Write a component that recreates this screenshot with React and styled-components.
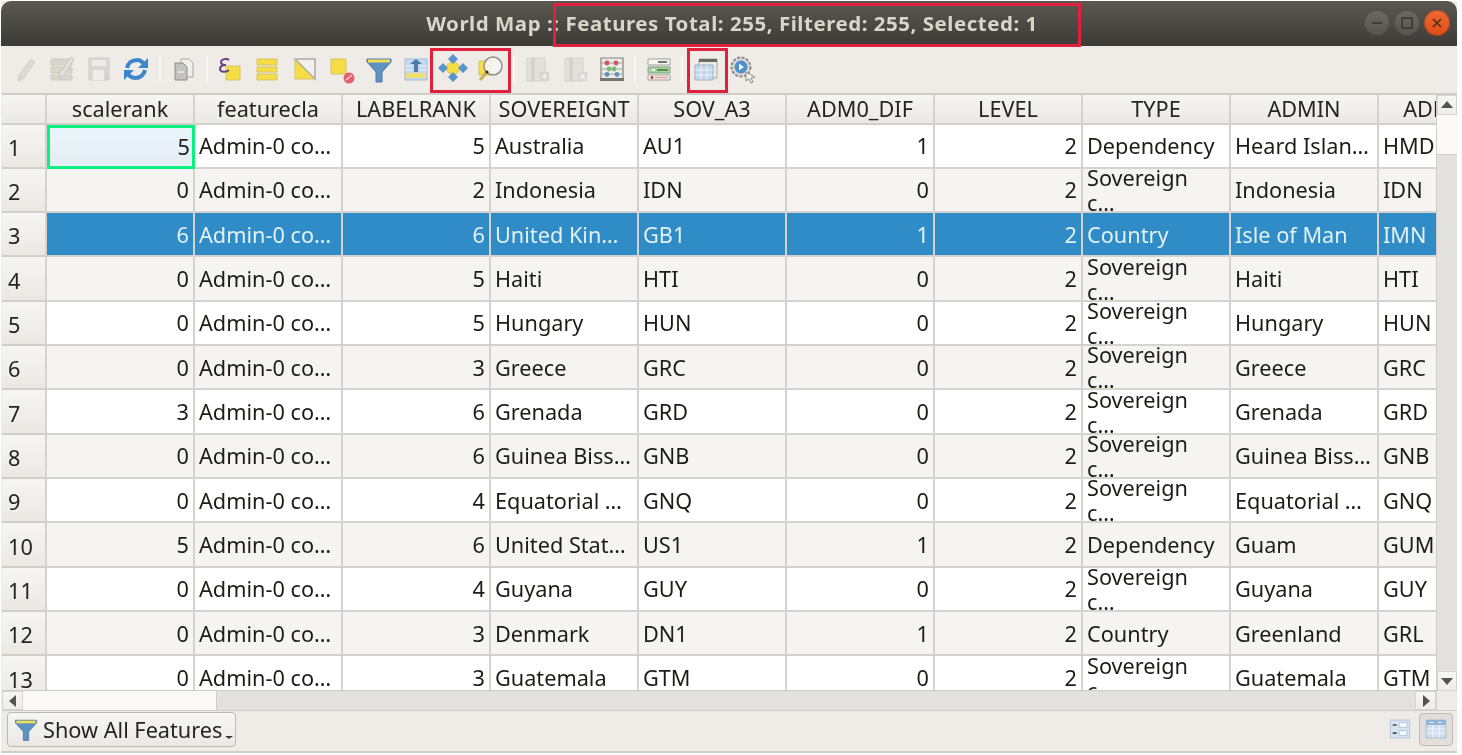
import React from 'react';
import styled, { createGlobalStyle } from 'styled-components';

const UI_FONT = '"Noto Sans", "Open Sans", sans-serif';

const GlobalStyle = createGlobalStyle`
  html, body {
    margin: 0;
    background: #fff;
    overflow: hidden;
  }
  body {
    font-family: ${UI_FONT};
  }
`;

const Page = styled.div`
  width: 1462px;
  height: 755px;
  padding: 1px 0 0 1px;
  box-sizing: border-box;
  filter: blur(0.45px);
`;

const Window = styled.div`
  position: relative;
  width: 1456px;
  height: 752px;
  display: flex;
  flex-direction: column;
  background: #efebe7;
  border-bottom: 2px solid #cfccc8;
  box-sizing: border-box;
`;

const TitleBar = styled.div`
  height: 45px;
  flex: none;
  display: grid;
  grid-template-columns: 1fr auto 1fr;
  align-items: center;
  border-radius: 10px 10px 0 0;
  background: linear-gradient(#5b5850, #3c3b37);
`;

const TitleText = styled.div`
  grid-column: 2;
  padding: 0 0 2px 6px;
  font-size: 20.45px;
  font-weight: 700;
  letter-spacing: 0.55px;
  color: #d9d5cb;
  white-space: nowrap;
`;

const WindowButtons = styled.div`
  grid-column: 3;
  justify-self: end;
  display: flex;
  gap: 4px;
  padding: 0 7px 2px 0;
`;

const WindowButton = styled.div`
  width: 26px;
  height: 26px;
  border-radius: 50%;
  display: flex;
  align-items: center;
  justify-content: center;
  background: ${(p) => (p.$close ? 'linear-gradient(#ee6a33, #df4c16)' : 'linear-gradient(#6c6a65, #55534e)')};
  box-shadow: inset 0 0 0 1px rgba(40, 40, 36, 0.35);
`;

const Toolbar = styled.div`
  height: 46.5px;
  flex: none;
  box-sizing: border-box;
  display: flex;
  align-items: center;
  padding: 0 0 1px 5px;
`;

const Tool = styled.div`
  width: 37.15px;
  height: 32px;
  flex: none;
  display: flex;
  align-items: center;
  justify-content: center;
`;

const ToolSeparator = styled.div`
  width: 10px;
  height: 26px;
  flex: none;
  display: flex;
  justify-content: center;
  &::before {
    content: '';
    width: 2px;
    background: #f8f6f4;
  }
`;

const TableArea = styled.div`
  display: grid;
  grid-template-columns: 1434px 21px;
  grid-template-rows: 596.5px 20px;
  flex: none;
  margin-left: 1px;
  border-top: 2px solid #cfccc8;
`;

const Viewport = styled.div`
  overflow: hidden;
  border-bottom: 1px solid #cfccc8;
`;

const HeaderRow = styled.div`
  display: flex;
  height: 30px;
`;

const Corner = styled.div`
  width: 45px;
  flex: none;
  box-sizing: border-box;
  background: linear-gradient(#f7f5f3, #ebe8e4);
  border-right: 2px solid #d6d3cf;
  border-bottom: 2px solid #d2cfcb;
`;

const ColumnHead = styled.div`
  width: 148px;
  flex: none;
  box-sizing: border-box;
  display: flex;
  align-items: center;
  justify-content: center;
  font-size: 21.7px;
  color: #26241f;
  white-space: nowrap;
  overflow: hidden;
  background: linear-gradient(#f7f5f3, #ebe8e4);
  border-right: 2px solid #d6d3cf;
  border-bottom: 2px solid #d2cfcb;
`;

const Row = styled.div`
  display: flex;
  height: 44.33px;
  background: ${(p) => (p.$selected ? '#308cc6' : p.$alt ? '#f6f4f2' : '#fff')};
  color: ${(p) => (p.$selected ? '#e2f0f8' : '#1e1c19')};
`;

const RowHead = styled.div`
  width: 45px;
  flex: none;
  box-sizing: border-box;
  padding: 3px 0 0 6px;
  display: flex;
  align-items: center;
  font-size: 21.7px;
  color: #26241f;
  background: linear-gradient(#f7f5f3, #ebe8e4);
  border-right: 2px solid #d6d3cf;
  border-bottom: 2px solid #d2cfcb;
`;

const Cell = styled.div`
  width: 148px;
  flex: none;
  box-sizing: border-box;
  padding: 0 4px;
  display: flex;
  align-items: center;
  justify-content: ${(p) => (p.$number ? 'flex-end' : 'flex-start')};
  font-size: 21.7px;
  line-height: 25px;
  white-space: pre-line;
  overflow: hidden;
  border-right: 2px solid #d6d3cf;
  border-bottom: 2px solid #d6d3cf;
  ${(p) =>
    p.$current &&
    `
    background: linear-gradient(#e8f4fb, #e6edf4);
    border: 3px solid #0cf07f;
    padding-right: 2px;
  `}
`;

const ScrollButton = styled.div`
  display: flex;
  align-items: center;
  justify-content: center;
  flex: none;
  box-sizing: border-box;
  background: linear-gradient(#f8f6f4, #efedea);
  border: 1px solid #d8d5d1;
`;

const VerticalBar = styled.div`
  display: flex;
  flex-direction: column;
  background: #e3e1dd;
  border-left: 1px solid #d2cfcb;
`;

const VerticalArrow = styled(ScrollButton)`
  height: 20px;
`;

const VerticalThumb = styled.div`
  height: 39px;
  background: #faf9f8;
  border-bottom: 1px solid #d2cfcb;
`;

const Spacer = styled.div`
  flex: 1;
`;

const HorizontalBar = styled.div`
  display: flex;
  background: #e3e1dd;
  border-bottom: 1px solid #cfccc8;
`;

const HorizontalArrow = styled(ScrollButton)`
  width: 21px;
`;

const HorizontalThumb = styled.div`
  width: 193px;
  background: #faf9f8;
  border-right: 1px solid #d2cfcb;
`;

const ScrollCorner = styled.div`
  background: #efebe7;
  border-left: 1px solid #d2cfcb;
  border-bottom: 1px solid #cfccc8;
`;

const BottomBar = styled.div`
  flex: 1;
  display: flex;
  align-items: center;
  justify-content: space-between;
  padding: 0 4px 4px 6px;
`;

const FilterButton = styled.div`
  width: 229px;
  height: 35px;
  box-sizing: border-box;
  position: relative;
  display: flex;
  align-items: center;
  gap: 3px;
  padding-left: 4px;
  font-size: 21.7px;
  color: #26241f;
  white-space: nowrap;
  border: 1px solid #bdbab5;
  border-radius: 4px;
  background: linear-gradient(#f8f6f4, #ebe8e4);
`;

const MenuMark = styled.span`
  position: absolute;
  right: 2px;
  bottom: 7px;
  border-left: 4px solid transparent;
  border-right: 4px solid transparent;
  border-top: 3px solid #3c3b37;
`;

const ViewToggles = styled.div`
  display: flex;
  align-items: center;
  gap: 2px;
`;

const ViewToggle = styled.div`
  width: 34px;
  height: 33px;
  box-sizing: border-box;
  display: flex;
  align-items: center;
  justify-content: center;
  border-radius: 4px;
  ${(p) => p.$on && 'background: #e2dfdb; border: 1px solid #bdbab5;'}
`;

// red boxes drawn over the screenshot
const Callout = styled.div`
  position: absolute;
  left: ${(p) => p.$x}px;
  top: ${(p) => p.$y}px;
  width: ${(p) => p.$w}px;
  height: ${(p) => p.$h}px;
  box-sizing: border-box;
  border: 3px solid #e0203c;
`;

const Svg = ({ size = 32, children }) => (
  <svg width={size} height={size} viewBox="0 0 32 32">
    {children}
  </svg>
);

const YELLOW = '#f6dd45';
const YELLOW_EDGE = '#d3c468';

const funnel = (
  <>
    <path d="M4 6h24v3l-9 10v10h-6V19L4 9z" fill="#5d92c4" stroke="#4c7aa6" />
    <path d="M5 6.500h22v3H5z" fill="#f3e052" />
  </>
);

const icons = {
  pencil: (
    <path d="M22 6l4 3L14 26l-5 2 1-6z" fill="#dedbd5" stroke="#d2cfc9" />
  ),
  multiEdit: (
    <>
      <path d="M5 6h21v6H5zM5 14h21v6H5zM5 22h21v5H5z" fill="#d8d5ca" stroke="#cfccc2" />
      <path d="M25 4l3 2-11 17-4 2 1-5z" fill="#e6e3dd" stroke="#c8c5bf" />
    </>
  ),
  save: (
    <>
      <path d="M6 5h20v22H6z" fill="#d9d7d3" stroke="#cfcdc9" />
      <path d="M9 7h14v6H9z" fill="#ecebe8" />
      <path d="M10 17h11v10H10z" fill="#efedea" />
      <path d="M22 20l5 3-5 5z" fill="#d3d0ca" />
    </>
  ),
  reload: (
    <g fill="none" stroke="#3b86cc" strokeWidth="4">
      <path d="M7 15c1-5 5-8 10-8 3 0 5 1 7 4" />
      <path d="M25 17c-1 5-5 8-10 8-3 0-5-1-7-4" />
      <path d="M28 5v10H18z" fill="#3b86cc" stroke="none" />
      <path d="M4 27V17h10z" fill="#3b86cc" stroke="none" />
    </g>
  ),
  clipboard: (
    <>
      <path d="M14 6h8l4 4v14H14z" fill="#f0eeeb" stroke="#a9a7a3" />
      <path d="M8 10h8l4 4v13H8z" fill="#c5c3bf" stroke="#8f8d89" />
      <path d="M11 19h6" stroke="#f0eeeb" strokeWidth="1.5" />
    </>
  ),
  expression: (
    <>
      <path d="M12 13h14v14H12z" fill={YELLOW} stroke={YELLOW_EDGE} />
      <path d="M15 7c-2-2-8-1-8 2 0 2 2 3 5 3-4 0-6 1-6 4 0 3 6 4 9 1" fill="none" stroke="#6b3f80" strokeWidth="2" />
    </>
  ),
  selectAll: (
    <path d="M6 6h20v6H6zM6 14h20v5H6zM6 21h20v6H6z" fill={YELLOW} stroke={YELLOW_EDGE} />
  ),
  invert: (
    <>
      <path d="M6 6h20v20z" fill="#f1f0ee" stroke="#aeaca7" strokeWidth="1.5" />
      <path d="M6 7v19h19z" fill={YELLOW} stroke={YELLOW_EDGE} />
    </>
  ),
  deselect: (
    <>
      <path d="M5 6h15v15H5z" fill={YELLOW} stroke={YELLOW_EDGE} />
      <circle cx="23" cy="25" r="5.500" fill="#e5606f" />
      <path d="M20 27l6-5" stroke="#f6c9cf" strokeWidth="1.6" />
    </>
  ),
  filter: funnel,
  moveTop: (
    <>
      <path d="M5 6h22v21H5z" fill="#c3d8ec" stroke="#a0bcd6" />
      <path d="M6 20h20v5H6z" fill="#efdf74" />
      <path d="M16 6l6 5h-4v8h-4v-8h-4z" fill="#4a7ca8" />
      <path d="M5 13h7M20 13h7M5 17h7M20 17h7" stroke="#eef3f8" />
    </>
  ),
  pan: (
    <>
      <path d="M16 7l9 8-9 9-9-9z" fill={YELLOW} stroke={YELLOW_EDGE} />
      <path d="M16 1l5 5-5 5-5-5zM16 19l5 5-5 5-5-5zM6 10l5 5-5 5-5-5zM26 10l5 5-5 5-5-5z" fill="#5a94cc" />
    </>
  ),
  zoomTo: (
    <>
      <path d="M5 8h13v14H5z" fill={YELLOW} stroke={YELLOW_EDGE} />
      <circle cx="19" cy="13" r="9" fill="#f5f5f2" fillOpacity="0.92" stroke="#92908b" strokeWidth="1.5" />
      <path d="M12 20l-6 7" stroke="#c8b25c" strokeWidth="3" />
      <circle cx="13" cy="19" r="1.500" fill="#2c2a26" />
    </>
  ),
  addColumn: (
    <>
      <path d="M6 5h18v23H6z" fill="#e3e0db" stroke="#d6d3ce" />
      <path d="M12 5v23" stroke="#d2cfca" strokeWidth="3" />
      <path d="M19 19h9v9h-9z" fill="#d8d6cf" />
      <path d="M23.500 21v5M21 23.500h5" stroke="#f4f3f0" strokeWidth="1.5" />
    </>
  ),
  removeColumn: (
    <>
      <path d="M6 5h18v23H6z" fill="#e3e0db" stroke="#d6d3ce" />
      <path d="M12 5v23" stroke="#d2cfca" strokeWidth="3" />
      <path d="M19 19h9v9h-9z" fill="#d8d6cf" />
      <path d="M21 21l5 5M26 21l-5 5" stroke="#f4f3f0" strokeWidth="1.5" />
    </>
  ),
  abacus: (
    <>
      <path d="M5 5h22v21H5z" fill="#ecebe7" stroke="#85837e" strokeWidth="1.2" />
      <path d="M4 25h24v3H4z" fill="#77756f" />
      <path d="M5 10h22M5 16h22M5 21h22" stroke="#a3a19c" />
      <circle cx="11" cy="10" r="2.400" fill="#d2545a" />
      <circle cx="20" cy="10" r="2.400" fill="#d2545a" />
      <circle cx="13" cy="16" r="2.400" fill="#7dbb78" />
      <circle cx="18" cy="16" r="2.400" fill="#7dbb78" />
      <circle cx="11" cy="21.500" r="2.400" fill="#5f93c4" />
      <circle cx="21" cy="21.500" r="2.400" fill="#5f93c4" />
    </>
  ),
  conditional: (
    <>
      <path d="M5 6h22v6H5z" fill="#f6f5f2" stroke="#a3a19c" />
      <path d="M15 9h9" stroke="#55534f" strokeWidth="1.6" />
      <path d="M5 14h22v6H5z" fill="#a5d49f" stroke="#7ea57a" />
      <path d="M9 17h3" stroke="#f6f5f2" strokeWidth="2" />
      <path d="M14 17h11" stroke="#5c8a58" strokeWidth="2" />
      <path d="M5 22h22v5H5z" fill="#f6f5f2" stroke="#a3a19c" />
      <circle cx="9" cy="24.500" r="1.500" fill="#c8313a" />
      <path d="M12 24.500h13" stroke="#e39aa0" strokeWidth="1.6" />
    </>
  ),
  dock: (
    <>
      <path d="M9 6h18v19H9z" fill="#ecebe8" stroke="#a8a6a1" />
      <path d="M9 6h18v3H9z" fill="#6b6964" />
      <path d="M5 12h18v15H5z" fill="#c2d7eb" stroke="#9aaec2" />
      <path d="M5 17h18M11 12v15M17 12v15M5 22h18" stroke="#eef3f8" />
    </>
  ),
  actions: (
    <>
      <circle cx="14" cy="14" r="9.500" fill="#dcdad6" stroke="#8e8c88" strokeWidth="2" strokeDasharray="3 1.500" />
      <circle cx="14" cy="14" r="6.500" fill="#4f8fcb" />
      <path d="M12 10.500l5 3.500-5 3.500z" fill="#f2f6fa" />
      <path d="M19 19l9 5-4 1 2 4-2 1-2-4-3 2z" fill="#f0efec" stroke="#8e8c88" />
    </>
  ),
  formView: (
    <>
      <path d="M4 5h24v22H4z" fill="#d7e4f1" stroke="#a9c0d6" />
      <path d="M7 11h5M7 21h5" stroke="#4d5258" strokeWidth="2" />
      <path d="M15 8h10v6H15zM15 18h10v6H15z" fill="#f6f9fc" stroke="#a9c0d6" />
    </>
  ),
  tableView: (
    <>
      <path d="M4 5h24v22H4z" fill="#d0e0ef" stroke="#98b5d2" />
      <path d="M4 5h24v6H4z" fill="#8fb4da" />
      <path d="M8 8h5M18 8h5" stroke="#f1f6fa" strokeWidth="1.500" />
      <path d="M4 16h24M4 21h24M12 11v16M20 11v16" stroke="#f4f7fa" />
    </>
  ),
};

const toolbarLayout = [
  ['pencil', 'multiEdit', 'save', 'reload'],
  ['clipboard'],
  ['expression', 'selectAll', 'invert', 'deselect', 'filter', 'moveTop', 'pan', 'zoomTo'],
  ['addColumn', 'removeColumn', 'abacus'],
  ['conditional'],
  ['dock', 'actions'],
];

const columns = [
  'scalerank',
  'featurecla',
  'LABELRANK',
  'SOVEREIGNT',
  'SOV_A3',
  'ADM0_DIF',
  'LEVEL',
  'TYPE',
  'ADMIN',
  'ADM0_A3',
];

const numeric = [true, false, true, false, false, true, true, false, false, false];

const SOV = 'Sovereign\nc…';
const CLASS = 'Admin-0 co…';

const rows = [
  [5, CLASS, 5, 'Australia', 'AU1', 1, 2, 'Dependency', 'Heard Islan…', 'HMD'],
  [0, CLASS, 2, 'Indonesia', 'IDN', 0, 2, SOV, 'Indonesia', 'IDN'],
  [6, CLASS, 6, 'United Kin…', 'GB1', 1, 2, 'Country', 'Isle of Man', 'IMN'],
  [0, CLASS, 5, 'Haiti', 'HTI', 0, 2, SOV, 'Haiti', 'HTI'],
  [0, CLASS, 5, 'Hungary', 'HUN', 0, 2, SOV, 'Hungary', 'HUN'],
  [0, CLASS, 3, 'Greece', 'GRC', 0, 2, SOV, 'Greece', 'GRC'],
  [3, CLASS, 6, 'Grenada', 'GRD', 0, 2, SOV, 'Grenada', 'GRD'],
  [0, CLASS, 6, 'Guinea Biss…', 'GNB', 0, 2, SOV, 'Guinea Biss…', 'GNB'],
  [0, CLASS, 4, 'Equatorial …', 'GNQ', 0, 2, SOV, 'Equatorial …', 'GNQ'],
  [5, CLASS, 6, 'United Stat…', 'US1', 1, 2, 'Dependency', 'Guam', 'GUM'],
  [0, CLASS, 4, 'Guyana', 'GUY', 0, 2, SOV, 'Guyana', 'GUY'],
  [0, CLASS, 3, 'Denmark', 'DN1', 1, 2, 'Country', 'Greenland', 'GRL'],
  [0, CLASS, 3, 'Guatemala', 'GTM', 0, 2, SOV, 'Guatemala', 'GTM'],
];

const Arrow = ({ dir }) => {
  const points = {
    up: '1,10 13,10 7,3',
    down: '1,4 13,4 7,11',
    left: '10,1 10,13 3,7',
    right: '4,1 4,13 11,7',
  };
  return (
    <svg width="14" height="14" viewBox="0 0 14 14">
      <polygon points={points[dir]} fill="#55534f" />
    </svg>
  );
};

export default function App() {
  return (
    <Page>
      <GlobalStyle />
      <Window>
        <TitleBar>
          <TitleText>World Map :: Features Total: 255, Filtered: 255, Selected: 1</TitleText>
          <WindowButtons>
            <WindowButton>
              <svg width="14" height="14" viewBox="0 0 14 14">
                <path d="M2 7h10" stroke="#37352f" strokeWidth="1.5" />
              </svg>
            </WindowButton>
            <WindowButton>
              <svg width="14" height="14" viewBox="0 0 14 14">
                <rect x="2" y="2" width="10" height="10" fill="none" stroke="#37352f" strokeWidth="1.5" />
              </svg>
            </WindowButton>
            <WindowButton $close>
              <svg width="14" height="14" viewBox="0 0 14 14">
                <path d="M3 3l8 8M11 3l-8 8" stroke="#4a2c1c" strokeWidth="1.5" />
              </svg>
            </WindowButton>
          </WindowButtons>
        </TitleBar>

        <Toolbar>
          {toolbarLayout.map((group, i) => (
            <React.Fragment key={i}>
              {i > 0 && <ToolSeparator />}
              {group.map((name) => (
                <Tool key={name}>
                  <Svg>{icons[name]}</Svg>
                </Tool>
              ))}
            </React.Fragment>
          ))}
        </Toolbar>

        <TableArea>
          <Viewport>
            <HeaderRow>
              <Corner />
              {columns.map((c) => (
                <ColumnHead key={c}>{c}</ColumnHead>
              ))}
            </HeaderRow>
            {rows.map((row, r) => (
              <Row key={r} $alt={r % 2 === 1} $selected={r === 2}>
                <RowHead>{r + 1}</RowHead>
                {row.map((value, c) => (
                  <Cell key={c} $number={numeric[c]} $current={r === 0 && c === 0}>
                    {value}
                  </Cell>
                ))}
              </Row>
            ))}
          </Viewport>
          <VerticalBar>
            <VerticalArrow>
              <Arrow dir="up" />
            </VerticalArrow>
            <VerticalThumb />
            <Spacer />
            <VerticalArrow>
              <Arrow dir="down" />
            </VerticalArrow>
          </VerticalBar>
          <HorizontalBar>
            <HorizontalArrow>
              <Arrow dir="left" />
            </HorizontalArrow>
            <HorizontalThumb />
            <Spacer />
            <HorizontalArrow>
              <Arrow dir="right" />
            </HorizontalArrow>
          </HorizontalBar>
          <ScrollCorner />
        </TableArea>

        <BottomBar>
          <FilterButton>
            <Svg size={28}>{funnel}</Svg>
            Show All Features
            <MenuMark />
          </FilterButton>
          <ViewToggles>
            <ViewToggle>
              <Svg size={26}>{icons.formView}</Svg>
            </ViewToggle>
            <ViewToggle $on>
              <Svg size={26}>{icons.tableView}</Svg>
            </ViewToggle>
          </ViewToggles>
        </BottomBar>

        <Callout $x={552} $y={2} $w={528} $h={44} />
        <Callout $x={429} $y={47} $w={81} $h={45} />
        <Callout $x={686} $y={47} $w={41} $h={45} />
      </Window>
    </Page>
  );
}
